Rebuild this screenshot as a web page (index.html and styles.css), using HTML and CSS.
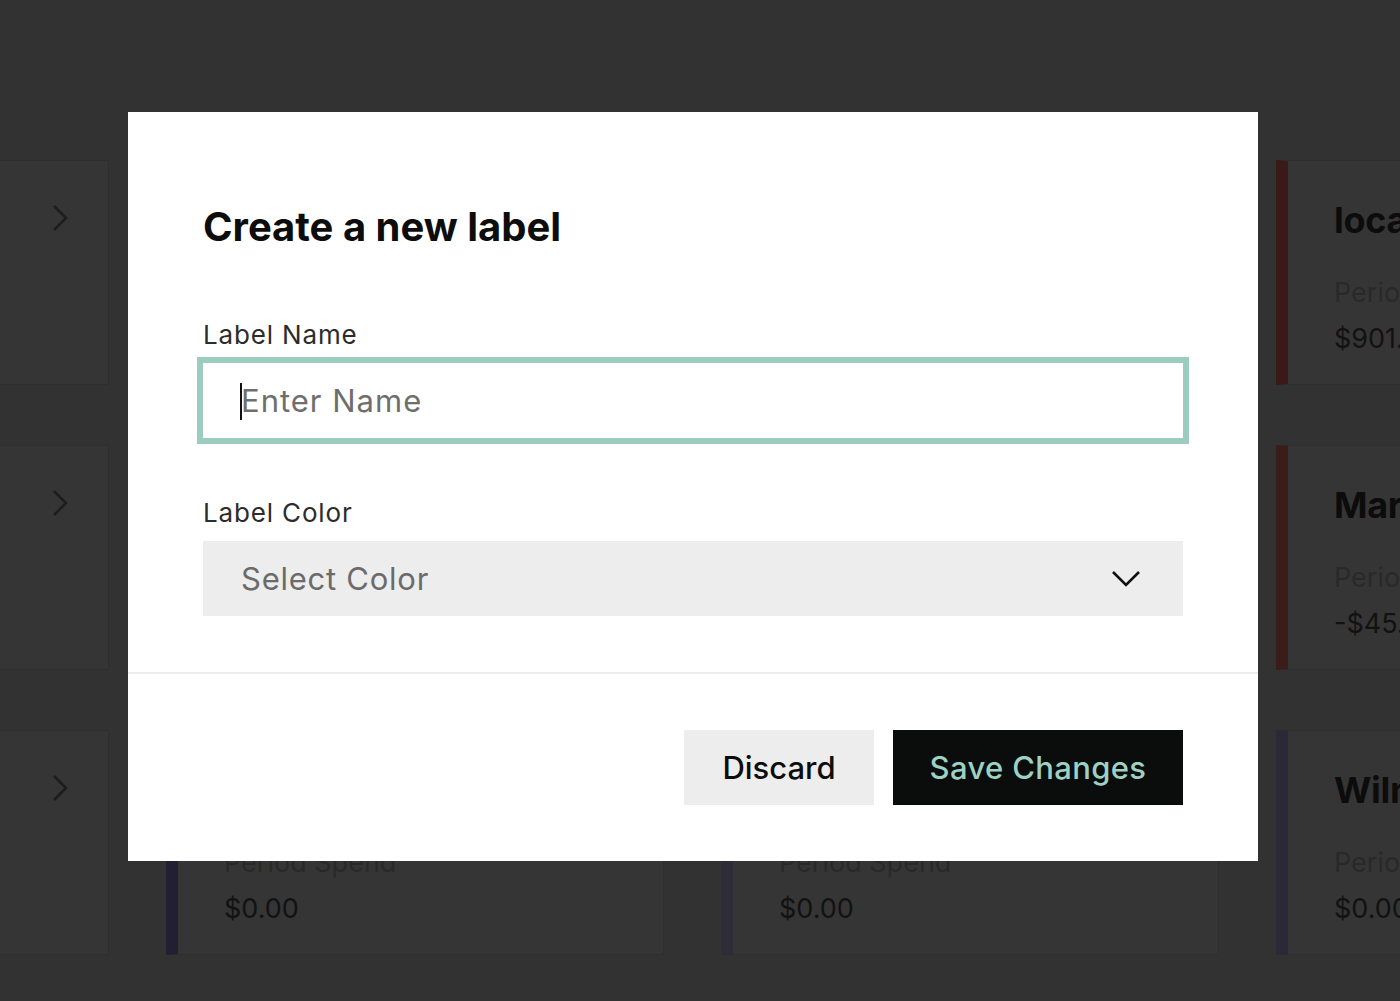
FILE: index.html
```html
<!DOCTYPE html>
<html lang="en">
<head>
<meta charset="utf-8">
<title>Create a new label</title>
<link rel="stylesheet" href="styles.css">
</head>
<body>
<main class="board">
  <div class="grid">
    <div class="card"><div class="card-head"><span class="card-title">Groceries</span><svg class="chev" viewBox="0 0 16 28"><polyline points="2,2 14,14 2,26"/></svg></div><div class="card-sub">Period Spend</div><div class="card-val">$120.00</div></div>
    <div class="card bar-a"><div class="card-head"><span class="card-title">Office</span><svg class="chev" viewBox="0 0 16 28"><polyline points="2,2 14,14 2,26"/></svg></div><div class="card-sub">Period Spend</div><div class="card-val">$0.00</div></div>
    <div class="card bar-b"><div class="card-head"><span class="card-title">Travel</span><svg class="chev" viewBox="0 0 16 28"><polyline points="2,2 14,14 2,26"/></svg></div><div class="card-sub">Period Spend</div><div class="card-val">$0.00</div></div>
    <div class="card bar-red"><div class="card-head"><span class="card-title">local</span></div><div class="card-sub">Period Spend</div><div class="card-val">$901.24</div></div>

    <div class="card"><div class="card-head"><span class="card-title">Dining</span><svg class="chev" viewBox="0 0 16 28"><polyline points="2,2 14,14 2,26"/></svg></div><div class="card-sub">Period Spend</div><div class="card-val">$0.00</div></div>
    <div class="card bar-a"><div class="card-head"><span class="card-title">Software</span><svg class="chev" viewBox="0 0 16 28"><polyline points="2,2 14,14 2,26"/></svg></div><div class="card-sub">Period Spend</div><div class="card-val">$0.00</div></div>
    <div class="card bar-b"><div class="card-head"><span class="card-title">Utilities</span><svg class="chev" viewBox="0 0 16 28"><polyline points="2,2 14,14 2,26"/></svg></div><div class="card-sub">Period Spend</div><div class="card-val">$0.00</div></div>
    <div class="card bar-red2"><div class="card-head"><span class="card-title">Marketing</span></div><div class="card-sub">Period Spend</div><div class="card-val">-$45.00</div></div>

    <div class="card"><div class="card-head"><span class="card-title">Rent</span><svg class="chev" viewBox="0 0 16 28"><polyline points="2,2 14,14 2,26"/></svg></div><div class="card-sub">Period Spend</div><div class="card-val">$0.00</div></div>
    <div class="card bar-indigo"><div class="card-head"><span class="card-title">Payroll</span><svg class="chev" viewBox="0 0 16 28"><polyline points="2,2 14,14 2,26"/></svg></div><div class="card-sub">Period Spend</div><div class="card-val">$0.00</div></div>
    <div class="card bar-slate"><div class="card-head"><span class="card-title">Supplies</span><svg class="chev" viewBox="0 0 16 28"><polyline points="2,2 14,14 2,26"/></svg></div><div class="card-sub">Period Spend</div><div class="card-val">$0.00</div></div>
    <div class="card bar-purple"><div class="card-head"><span class="card-title">Wilmington</span></div><div class="card-sub">Period Spend</div><div class="card-val">$0.00</div></div>
  </div>
</main>

<div class="modal" role="dialog" aria-labelledby="modal-title">
  <div class="modal-body">
    <h1 class="modal-title" id="modal-title">Create a new label</h1>
    <label class="field-label" for="label-name">Label Name</label>
    <div class="input-wrap">
      <input class="text-input" id="label-name" type="text" placeholder="Enter Name">
      <span class="caret"></span>
    </div>
    <label class="field-label second" for="label-color">Label Color</label>
    <div class="select">
      <span class="select-text">Select Color</span>
      <svg class="select-chev" viewBox="0 0 30 17"><polyline points="2,2 15,15 28,2"/></svg>
    </div>
  </div>
  <div class="modal-footer">
    <button class="btn btn-discard" type="button">Discard</button>
    <button class="btn btn-save" type="button">Save Changes</button>
  </div>
</div>
</body>
</html>
```

FILE: styles.css
```css
* { box-sizing: border-box; }

html, body {
  margin: 0;
  padding: 0;
  width: 1400px;
  height: 1001px;
  overflow: hidden;
  background: #323232;
  font-family: Inter, "Liberation Sans", Arial, sans-serif;
}

.board {
  padding-top: 160px;
  margin-left: -389px;
}

.grid {
  display: grid;
  grid-template-columns: repeat(4, 498px);
  grid-auto-rows: 225px;
  column-gap: 57px;
  row-gap: 60px;
}

.card {
  background: #353535;
  border: 1px solid #2e2e2e;
  border-left: 12px solid #353535;
  padding: 37px 40px 0 46px;
}

.bar-a { border-left-color: #231f33; }
.bar-b { border-left-color: #2c2b36; }
.bar-red { border-left-color: #3a1a18; }
.bar-red2 { border-left-color: #3a1c18; }
.bar-indigo { border-left-color: #221f33; }
.bar-slate { border-left-color: #2d2c37; }
.bar-purple { border-left-color: #2b2938; }

.card-head {
  display: flex;
  align-items: center;
  justify-content: space-between;
  height: 44px;
}

.card-title {
  font-size: 36px;
  font-weight: 700;
  color: #0c0c0c;
  line-height: 44px;
  letter-spacing: -0.3px;
}

.chev {
  width: 16px;
  height: 28px;
  fill: none;
  stroke: #1d1d1d;
  stroke-width: 2.5;
  margin-top: -4px;
}

.card-sub {
  margin-top: 34px;
  font-size: 27px;
  line-height: 34px;
  color: #292929;
}

.card-val {
  margin-top: 12px;
  font-size: 27px;
  line-height: 34px;
  color: #121212;
}

/* Modal */
.modal {
  position: fixed;
  left: 128px;
  top: 112px;
  width: 1130px;
  background: #ffffff;
}

.modal-body {
  padding: 91px 75px 56px;
  border-bottom: 2px solid #ececec;
}

.modal-title {
  margin: 0 0 68px;
  font-size: 40px;
  line-height: 48px;
  font-weight: 700;
  color: #0d0d0d;
  letter-spacing: 0;
}

.field-label {
  display: block;
  font-size: 26px;
  line-height: 32px;
  color: #2c2c2c;
  letter-spacing: 0.85px;
  margin-bottom: 12px;
}

.field-label.second {
  margin-top: 59px;
}

.input-wrap {
  position: relative;
  height: 75px;
  box-shadow: 0 0 0 6px #9ccbbf;
}

.text-input {
  display: block;
  width: 100%;
  height: 75px;
  border: 0;
  outline: none;
  padding: 0 0 0 38px;
  font-family: inherit;
  font-size: 31px;
  letter-spacing: 1px;
  color: #111;
  background: #fff;
}

.text-input::placeholder {
  color: #6e6e6e;
}

.caret {
  position: absolute;
  left: 37px;
  top: 20px;
  width: 2px;
  height: 37px;
  background: #111;
}

.select {
  display: flex;
  align-items: center;
  justify-content: space-between;
  height: 75px;
  padding: 0 42px 0 38px;
  background: #ededed;
}

.select-text {
  font-size: 31px;
  letter-spacing: 0.75px;
  color: #6b6b6b;
}

.select-chev {
  width: 30px;
  height: 17px;
  fill: none;
  stroke: #111;
  stroke-width: 2.6;
}

.modal-footer {
  display: flex;
  justify-content: flex-end;
  gap: 19px;
  padding: 56px 75px;
}

.btn {
  height: 75px;
  border: 0;
  font-family: inherit;
  font-size: 31px;
  font-weight: 500;
  cursor: pointer;
}

.btn-discard {
  width: 190px;
  background: #ededed;
  color: #0d0d0d;
}

.btn-save {
  width: 290px;
  background: #0a0d0c;
  color: #9dd1c3;
  letter-spacing: 0.35px;
}
```
